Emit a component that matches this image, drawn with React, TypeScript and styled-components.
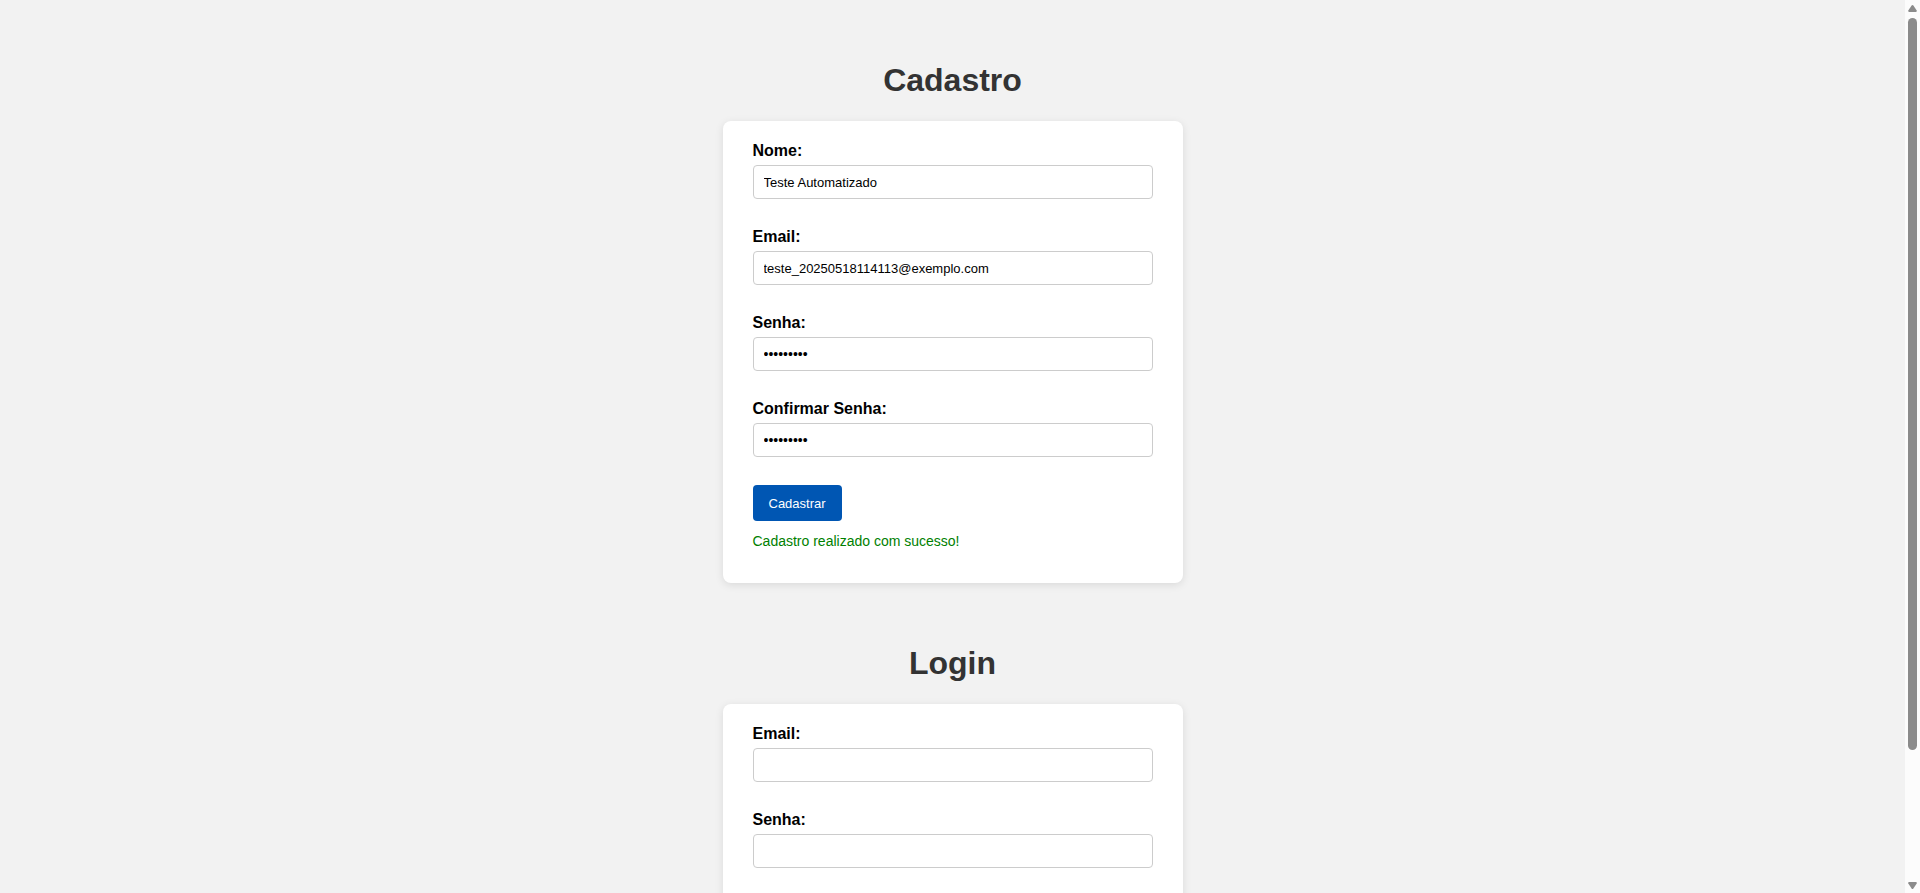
import React, { useEffect, useRef, useState } from 'react';
import styled, { createGlobalStyle } from 'styled-components';

const GlobalStyle = createGlobalStyle`
  *, *::before, *::after { box-sizing: border-box; }
  body {
    margin: 0;
    background: #f2f2f2;
    font-family: Arial, "Liberation Sans", sans-serif;
  }
`;

const Frame = styled.div`
  display: grid;
  grid-template-columns: 1fr 15px;
  height: 100vh;
`;

const Page = styled.main`
  display: flex;
  flex-direction: column;
  align-items: center;
  min-width: 0;
  overflow-y: auto;
  scrollbar-width: none;
  padding-bottom: 52px;
`;

const Section = styled.section`
  flex-shrink: 0;
  width: 100%;
  max-width: 460px;
  padding-top: 62px;
`;

const Title = styled.h1`
  margin: 0 0 22px;
  color: #333;
  font-size: 32px;
  line-height: 37px;
  text-align: center;
`;

const Card = styled.form`
  display: flex;
  flex-direction: column;
  align-items: flex-start;
  padding: 20px 30px 34px;
  border-radius: 8px;
  background: #fff;
  box-shadow: 0 2px 8px rgba(0, 0, 0, 0.1);
`;

const Field = styled.div`
  display: flex;
  flex-direction: column;
  gap: 4px;
  width: 100%;
  margin-bottom: 28px;
`;

const Label = styled.label`
  color: #000;
  font-size: 16px;
  font-weight: bold;
  line-height: 20px;
`;

const Input = styled.input`
  width: 100%;
  height: 34px;
  padding: 8px 10px;
  border: 1px solid #ccc;
  border-radius: 4px;
  background: #fff;
  color: #000;
  font-family: inherit;
  font-size: ${({ type }) => (type === 'password' ? '14px' : '13px')};
  outline: none;

  &:focus { border-color: #0056b3; }
`;

const Button = styled.button`
  height: 36px;
  padding: 10px 16px;
  border: 0;
  border-radius: 4px;
  background: #0056b3;
  color: #fff;
  font-family: inherit;
  font-size: 13px;
  cursor: pointer;
`;

const Message = styled.p`
  min-height: 16px;
  margin: 12px 0 0;
  color: #008000;
  font-size: 14px;
  line-height: 16px;
`;

const Scrollbar = styled.div`
  display: flex;
  flex-direction: column;
  align-items: center;
  padding: 5px 0 4px;
  background: #fcfcfc;
`;

const Arrow = styled.svg`
  display: block;
  flex: none;
  width: 9px;
  height: 7px;
  fill: #8b8b8b;
`;

const Track = styled.div`
  flex: 1;
  width: 9px;
  margin: 6px 0;
`;

const Thumb = styled.div`
  width: 9px;
  border-radius: 5px;
  background: #8b8b8b;
`;

type FieldData = { id: string; label: string; type: string; value?: string };

const signUpFields: FieldData[] = [
  { id: 'nome', label: 'Nome:', type: 'text', value: 'Teste Automatizado' },
  { id: 'email', label: 'Email:', type: 'email', value: 'teste_20250518114113@exemplo.com' },
  { id: 'senha', label: 'Senha:', type: 'password', value: 'senha1234' },
  { id: 'confirmar', label: 'Confirmar Senha:', type: 'password', value: 'senha1234' },
];

const loginFields: FieldData[] = [
  { id: 'login-email', label: 'Email:', type: 'email' },
  { id: 'login-senha', label: 'Senha:', type: 'password' },
];

type FormSectionProps = { title: string; fields: FieldData[]; action: string; message?: string };

function FormSection({ title, fields, action, message }: FormSectionProps) {
  return (
    <Section>
      <Title>{title}</Title>
      <Card onSubmit={(e: React.FormEvent) => e.preventDefault()}>
        {fields.map((f) => (
          <Field key={f.id}>
            <Label htmlFor={f.id}>{f.label}</Label>
            <Input id={f.id} type={f.type} defaultValue={f.value} />
          </Field>
        ))}
        <Button type="submit">{action}</Button>
        <Message role="status">{message}</Message>
      </Card>
    </Section>
  );
}

export default function App() {
  const page = useRef<HTMLElement>(null);
  const [bar, setBar] = useState({ size: 85, top: 0 });

  // Keep the thumb in step with the scrolled share of the page.
  const update = () => {
    const el = page.current;
    if (!el) return;
    setBar({
      size: (el.clientHeight / el.scrollHeight) * 100,
      top: (el.scrollTop / el.scrollHeight) * 100,
    });
  };

  useEffect(() => {
    update();
    window.addEventListener('resize', update);
    return () => window.removeEventListener('resize', update);
  }, []);

  return (
    <>
      <GlobalStyle />
      <Frame>
        <Page ref={page} onScroll={update}>
          <FormSection
            title="Cadastro"
            fields={signUpFields}
            action="Cadastrar"
            message="Cadastro realizado com sucesso!"
          />
          <FormSection title="Login" fields={loginFields} action="Entrar" />
        </Page>
        <Scrollbar aria-hidden="true">
          <Arrow viewBox="0 0 9 7">
            <path d="M4.5 0Q5 0 5.4 .6L8.7 5.6Q9 7 8 7H1Q0 7 .3 5.6L3.6 .6Q4 0 4.5 0Z" />
          </Arrow>
          <Track>
            <Thumb style={{ height: `${bar.size}%`, transform: `translateY(${(bar.top / bar.size) * 100}%)` }} />
          </Track>
          <Arrow viewBox="0 0 9 7">
            <path d="M4.5 7Q4 7 3.6 6.4L.3 1.4Q0 0 1 0H8Q9 0 8.7 1.4L5.4 6.4Q5 7 4.5 7Z" />
          </Arrow>
        </Scrollbar>
      </Frame>
    </>
  );
}
